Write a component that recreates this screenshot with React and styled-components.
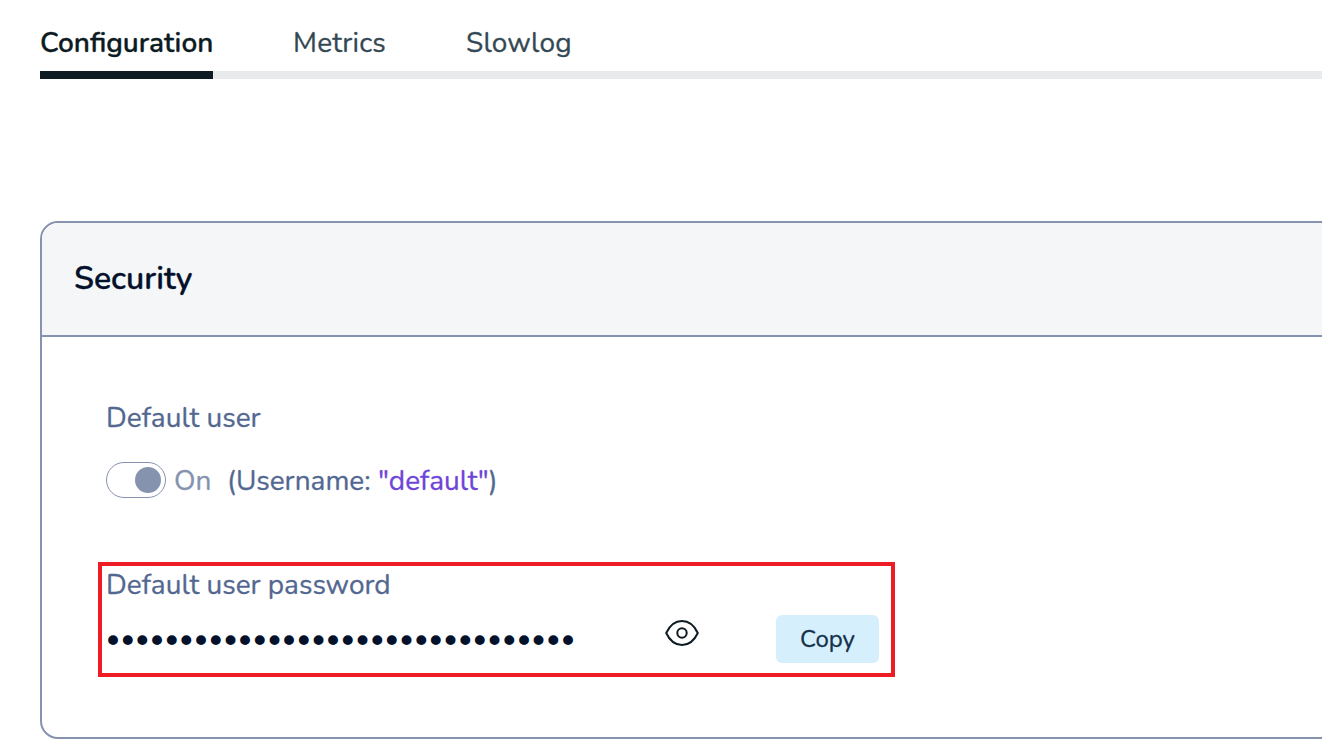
import React from "react";
import styled, { createGlobalStyle } from "styled-components";

const GlobalStyle = createGlobalStyle`
  * { box-sizing: border-box; }
  html, body { margin: 0; background: #fff; overflow: hidden; }
  body {
    font-family: Nunito, Lato, "Open Sans", sans-serif;
    font-size: 28px;
    -webkit-text-stroke: 0.3px currentColor;
  }
`;

const Page = styled.main`
  height: 754px;
  padding-left: 40px;
  overflow: hidden;
`;

const Tabs = styled.nav`
  display: flex;
  gap: 80px;
  height: 79px;
  box-shadow: inset 0 -8px #e9eaeb;
`;

const Tab = styled.a`
  width: ${(p) => p.$width}px;
  height: 79px;
  padding-top: 23px;
  line-height: 40px;
  white-space: nowrap;
  letter-spacing: ${(p) => p.$tracking || 0}px;
  font-weight: ${(p) => (p.$active ? 600 : 400)};
  color: ${(p) => (p.$active ? "#0d1b23" : "#344854")};
  border-bottom: 8px solid ${(p) => (p.$active ? "#0d1b23" : "transparent")};
`;

const Card = styled.section`
  width: 1400px;
  height: 518px;
  margin-top: 142px;
  border: 2px solid #8593ae;
  border-radius: 18px;
  overflow: hidden;
`;

const CardHeader = styled.header`
  display: flex;
  align-items: center;
  height: 114px;
  padding: 0 32px;
  background: #f4f6f8;
  border-bottom: 2px solid #8593ae;
`;

const Title = styled.h2`
  margin: 0;
  font-size: 32px;
  line-height: 40px;
  font-weight: 600;
  color: #04112b;
`;

const CardBody = styled.div`
  padding: 61px 56px 0;
`;

const Label = styled.div`
  line-height: 40px;
  white-space: nowrap;
  color: #536890;
`;

const Field = styled.div`
  padding-left: 8px;
`;

const ToggleRow = styled.div`
  display: flex;
  align-items: center;
  height: 40px;
  margin-top: 22px;
`;

const Toggle = styled.span`
  display: flex;
  align-items: center;
  justify-content: flex-end;
  width: 60px;
  height: 36px;
  padding-right: 4px;
  border: 1px solid #8593ae;
  border-radius: 18px;
`;

const Knob = styled.span`
  width: 26px;
  height: 26px;
  border-radius: 50%;
  background: #8593ae;
`;

const ToggleText = styled.div`
  display: flex;
  padding: 2px 0 0 8px;
  line-height: 40px;
`;

const State = styled.span`
  width: 53px;
  color: #8593ae;
`;

const Value = styled.span`
  color: #6f45d8;
  -webkit-text-stroke-color: #6f45d8;
`;

const Highlight = styled.div`
  width: 797px;
  height: 115px;
  margin-top: 62px;
  padding: 0 12px 0 4px;
  border: 4px solid #ee1c25;
`;

const PasswordLabel = styled(Label)`
  height: 39px;
  line-height: 38px;
`;

const SecretRow = styled.div`
  display: flex;
  height: 48px;
  margin-top: 10px;
`;

const Dots = styled.span`
  width: 558px;
  font-family: "DejaVu Sans", sans-serif;
  font-size: 34px;
  line-height: 52px;
  letter-spacing: -5.38px;
  text-indent: -3px;
  white-space: nowrap;
  color: #04112b;
  -webkit-text-stroke: 0;
`;

const IconButton = styled.button`
  width: 36px;
  height: 36px;
  padding: 0;
  border: 0;
  background: none;
  color: #0d1b23;

  svg { display: block; }
`;

const CopyButton = styled.button`
  width: 103px;
  height: 48px;
  margin-left: auto;
  padding: 0;
  border: 0;
  border-radius: 6px;
  background: #d6effd;
  font-family: inherit;
  font-size: 24px;
  line-height: 48px;
  color: #14304a;
`;

function EyeIcon() {
  return (
    <svg width="36" height="36" viewBox="0 0 36 36" fill="none" stroke="currentColor" strokeWidth="2" strokeLinejoin="round">
      <path d="M2.2 18C5.7 10.5 11.2 6 18 6s12.3 4.5 15.8 12c-3.5 7.5-9 12-15.8 12S5.7 25.5 2.2 18Z" />
      <circle cx="18" cy="18" r="4.7" />
    </svg>
  );
}

export default function App() {
  return (
    <Page>
      <GlobalStyle />
      <Tabs>
        <Tab $active $width={173}>Configuration</Tab>
        <Tab $width={93} $tracking={0.2}>Metrics</Tab>
        <Tab $width={106} $tracking={0.2}>Slowlog</Tab>
      </Tabs>
      <Card>
        <CardHeader>
          <Title>Security</Title>
        </CardHeader>
        <CardBody>
          <Field>
            <Label>Default user</Label>
            <ToggleRow>
              <Toggle><Knob /></Toggle>
              <ToggleText>
                <State>On</State>
                <Label>(Username: <Value>"default"</Value>)</Label>
              </ToggleText>
            </ToggleRow>
          </Field>
          <Highlight>
            <PasswordLabel>Default user password</PasswordLabel>
            <SecretRow>
              <Dots>{"•".repeat(32)}</Dots>
              <IconButton aria-label="Show password"><EyeIcon /></IconButton>
              <CopyButton>Copy</CopyButton>
            </SecretRow>
          </Highlight>
        </CardBody>
      </Card>
    </Page>
  );
}
